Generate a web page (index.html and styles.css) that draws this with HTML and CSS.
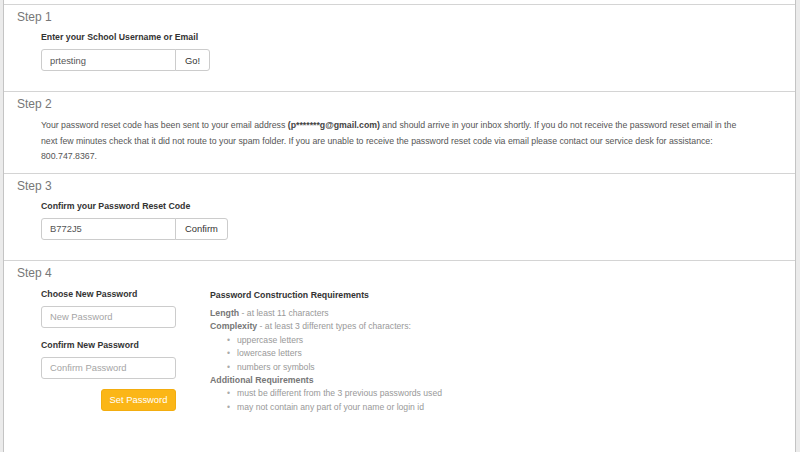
FILE: index.html
```html
<!DOCTYPE html>
<html lang="en">
<head>
<meta charset="utf-8">
<title>Password Reset</title>
<link rel="stylesheet" href="styles.css">
</head>
<body>
<div class="page">
  <div class="panel">
    <section class="step">
      <h2 class="step-title">Step 1</h2>
      <div class="step-body">
        <label class="field-label" for="user">Enter your School Username or Email</label>
        <div class="input-group">
          <input id="user" class="text-input" type="text" value="prtesting">
          <button class="addon-btn" type="button">Go!</button>
        </div>
      </div>
    </section>

    <section class="step step-notice">
      <h2 class="step-title">Step 2</h2>
      <div class="step-body">
        <p class="step-text">Your password reset code has been sent to your email address <strong>(p*******g@gmail.com)</strong> and should arrive in your inbox shortly. If you do not receive the password reset email in the next few minutes check that it did not route to your spam folder. If you are unable to receive the password reset code via email please contact our service desk for assistance: 800.747.8367.</p>
      </div>
    </section>

    <section class="step">
      <h2 class="step-title">Step 3</h2>
      <div class="step-body">
        <label class="field-label" for="code">Confirm your Password Reset Code</label>
        <div class="input-group">
          <input id="code" class="text-input" type="text" value="B772J5">
          <button class="addon-btn" type="button">Confirm</button>
        </div>
      </div>
    </section>

    <section class="step step-last">
      <h2 class="step-title">Step 4</h2>
      <div class="step-body columns">
        <div class="pw-col">
          <label class="field-label" for="pw1">Choose New Password</label>
          <input id="pw1" class="text-input" type="password" placeholder="New Password">
          <label class="field-label second" for="pw2">Confirm New Password</label>
          <input id="pw2" class="text-input" type="password" placeholder="Confirm Password">
          <button class="primary-btn" type="button">Set Password</button>
        </div>
        <div class="req-col">
          <h4 class="req-title">Password Construction Requirements</h4>
          <div class="req-line"><strong>Length</strong> - at least 11 characters</div>
          <div class="req-line"><strong>Complexity</strong> - at least 3 different types of characters:</div>
          <ul class="req-list">
            <li>uppercase letters</li>
            <li>lowercase letters</li>
            <li>numbers or symbols</li>
          </ul>
          <div class="req-line"><strong>Additional Requirements</strong></div>
          <ul class="req-list">
            <li>must be different from the 3 previous passwords used</li>
            <li>may not contain any part of your name or login id</li>
          </ul>
        </div>
      </div>
    </section>
  </div>
</div>
</body>
</html>
```
FILE: styles.css
```css
html, body {
  margin: 0;
  padding: 0;
}

body {
  font-family: "Liberation Sans", Arial, sans-serif;
  background: #ebebeb;
}

.page {
  display: flex;
  min-height: 452px;
  padding: 0 4px 0 3px;
  box-sizing: border-box;
}

.panel {
  flex: 1;
  background: #fff;
  border-left: 1px solid #c4c4c4;
  border-right: 1px solid #c4c4c4;
  padding-top: 4px;
}

.step {
  border-top: 1px solid #d4d4d4;
  padding: 4px 0 20px;
}

.step-notice {
  padding-bottom: 8px;
}

.step-last {
  padding-bottom: 0;
}

.step-title {
  margin: 0 0 5px 13px;
  font-size: 12px;
  line-height: 17px;
  font-weight: normal;
  color: #777;
}

.step-body {
  padding-left: 37px;
}

.field-label {
  display: block;
  font-size: 8.75px;
  line-height: 12px;
  font-weight: bold;
  color: #333;
  margin-bottom: 6px;
}

.field-label.second {
  margin-top: 11px;
}

.input-group {
  display: flex;
}

.text-input {
  width: 135px;
  height: 22px;
  box-sizing: border-box;
  margin: 0;
  border: 1px solid #ccc;
  border-radius: 3px;
  padding: 0 8px;
  font-family: "Liberation Sans", Arial, sans-serif;
  font-size: 9.4px;
  color: #555;
  background: #fff;
  outline: none;
}

.text-input::placeholder {
  color: #a5a5a5;
}

.input-group .text-input {
  border-radius: 3px 0 0 3px;
}

.addon-btn {
  height: 22px;
  box-sizing: border-box;
  margin: 0 0 0 -1px;
  padding: 0 9px;
  border: 1px solid #ccc;
  border-radius: 0 3px 3px 0;
  background: #fff;
  font-family: "Liberation Sans", Arial, sans-serif;
  font-size: 9.4px;
  color: #333;
}

.step-text {
  margin: 0;
  max-width: 710px;
  font-size: 8.75px;
  line-height: 15.5px;
  color: #555;
}

.step-text strong {
  color: #444;
}

.columns {
  display: flex;
  gap: 34px;
  padding-top: 1px;
}

.pw-col {
  display: flex;
  flex-direction: column;
  width: 135px;
}

.primary-btn {
  align-self: flex-end;
  width: 75px;
  height: 22px;
  margin-top: 10px;
  padding: 0;
  box-sizing: border-box;
  border: 1px solid #f3ad0f;
  border-radius: 3px;
  background: #fbb617;
  color: #fff;
  font-family: "Liberation Sans", Arial, sans-serif;
  font-size: 9.4px;
}

.req-col {
  padding-top: 1.5px;
  font-size: 8.65px;
  line-height: 13.4px;
  color: #999;
}

.req-title {
  margin: 0 0 4.5px;
  font-size: 8.75px;
  line-height: 13.4px;
  font-weight: bold;
  color: #333;
}

.req-line strong {
  color: #777;
  font-size: 8.75px;
}

.req-list {
  margin: 0;
  padding-left: 27px;
  list-style: none;
}

.req-list li::before {
  content: "\2022";
  display: inline-block;
  width: 10px;
  margin-left: -10px;
  color: #aaa;
}
```
